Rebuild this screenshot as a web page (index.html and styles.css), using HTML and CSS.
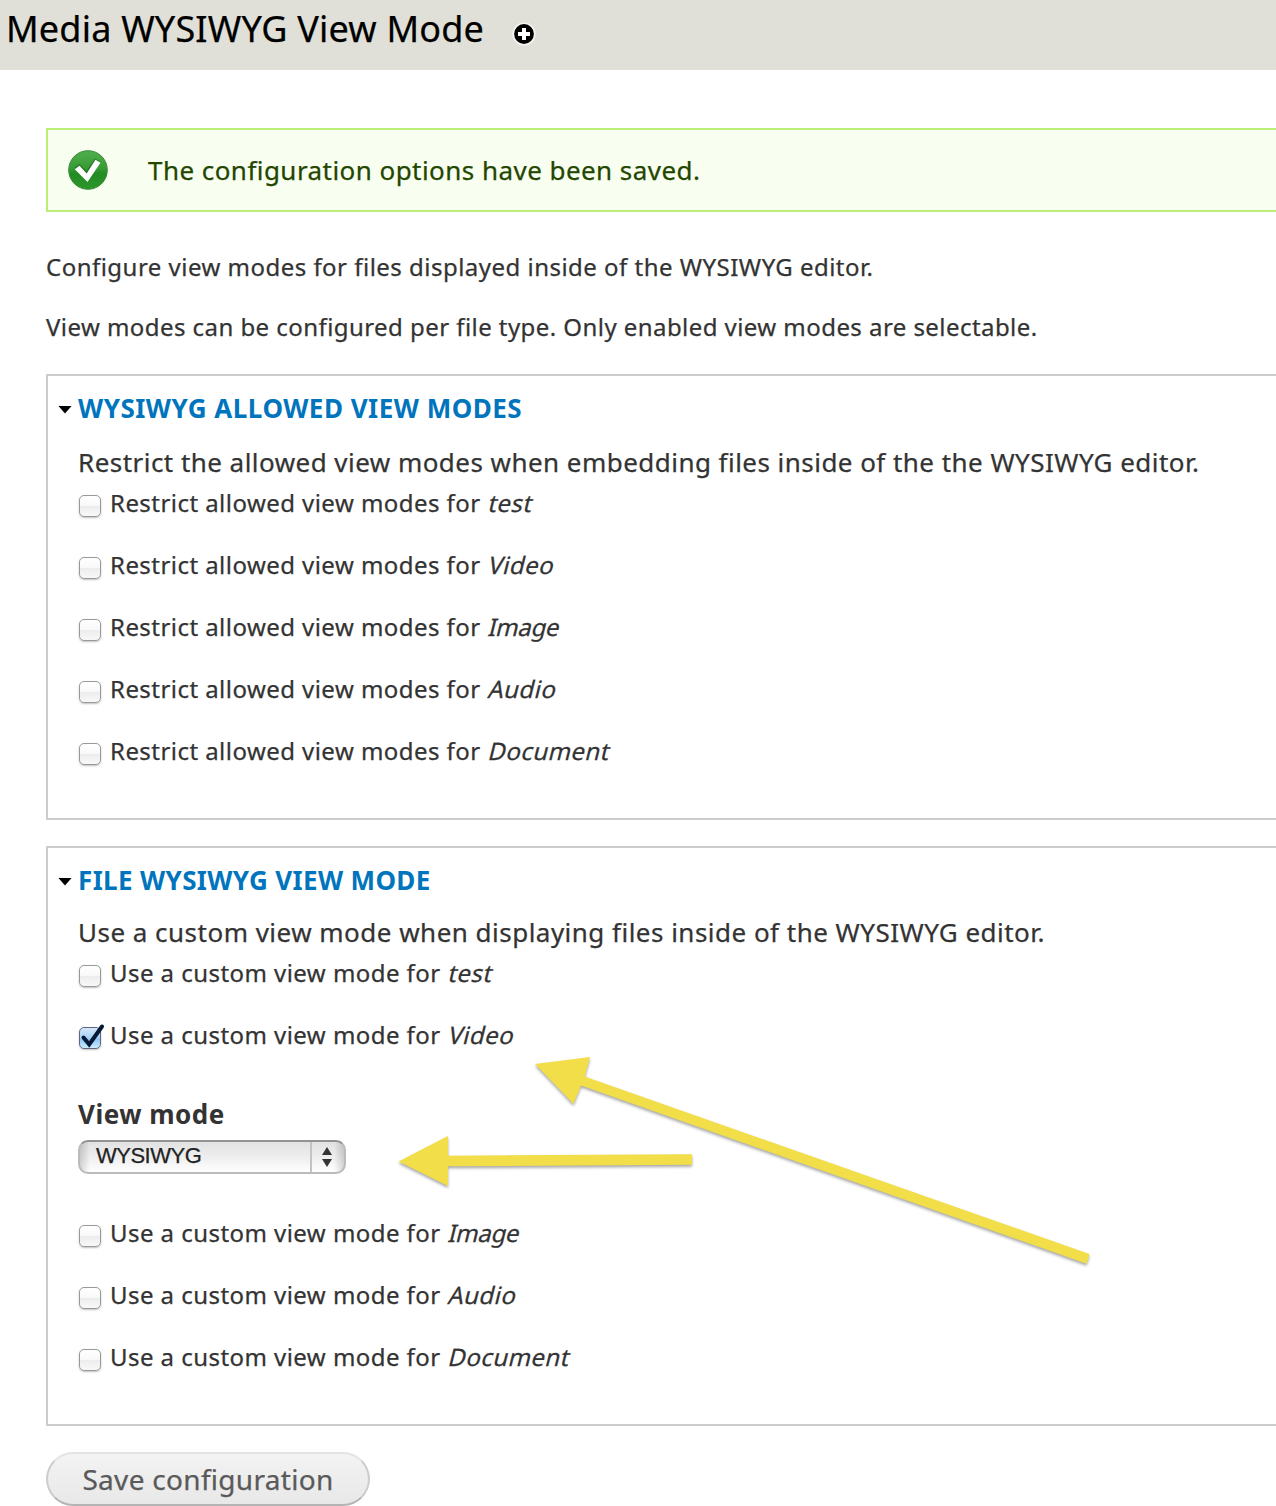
FILE: index.html
```html
<!DOCTYPE html>
<html lang="en">
<head>
<meta charset="utf-8">
<title>Media WYSIWYG View Mode</title>
<link rel="stylesheet" href="styles.css">
</head>
<body>
<header class="branding">
  <h1 class="page-title">Media WYSIWYG View Mode</h1>
  <a class="shortcut" aria-label="Add to shortcuts">
    <svg width="24" height="24" viewBox="0 0 24 24"><circle cx="12" cy="12" r="11.6" fill="#f5f5f3"/><circle cx="12" cy="12" r="9.9" fill="#000"/><path d="M12 6v12M6 12h12" stroke="#fff" stroke-width="4"/></svg>
  </a>
</header>
<main class="content">
  <div class="status">
    <svg class="status-icon" width="44" height="44" viewBox="0 0 44 44">
      <defs><linearGradient id="ok" x1="0" y1="0" x2="0" y2="1"><stop offset="0" stop-color="#4fae4c"/><stop offset=".45" stop-color="#379c35"/><stop offset=".6" stop-color="#228b22"/><stop offset="1" stop-color="#2c982b"/></linearGradient></defs>
      <circle cx="22" cy="22" r="19.3" fill="url(#ok)" stroke="#3a8a3a"/>
      <path d="M8.500 19.500l5-3.500 6.800 7 8.700-12.500 5.500 3.200-12.500 19z" fill="#235f23" opacity=".6"/>
      <path d="M8.800 21.200l4.700-3.400 7.200 7.700 8.800-13.700 5 3-13 19.200z" fill="#fff"/>
    </svg>
    <span class="status-text">The configuration options have been saved.</span>
  </div>
  <div class="help">
    <p>Configure view modes for files displayed inside of the WYSIWYG editor.</p>
    <p class="help-second">View modes can be configured per file type. Only enabled view modes are selectable.</p>
  </div>
  <section class="fieldset fieldset-allowed">
    <h2 class="legend"><span class="arrow"></span>WYSIWYG ALLOWED VIEW MODES</h2>
    <p class="description">Restrict the allowed view modes when embedding files inside of the the WYSIWYG editor.</p>
    <div class="options">
      <label class="option"><span class="box"></span><span>Restrict allowed view modes for <em>test</em></span></label>
      <label class="option"><span class="box"></span><span>Restrict allowed view modes for <em>Video</em></span></label>
      <label class="option"><span class="box"></span><span>Restrict allowed view modes for <em class="tight">Image</em></span></label>
      <label class="option"><span class="box"></span><span>Restrict allowed view modes for <em>Audio</em></span></label>
      <label class="option"><span class="box"></span><span>Restrict allowed view modes for <em>Document</em></span></label>
    </div>
  </section>
  <section class="fieldset fieldset-custom">
    <h2 class="legend"><span class="arrow"></span>FILE WYSIWYG VIEW MODE</h2>
    <p class="description">Use a custom view mode when displaying files inside of the WYSIWYG editor.</p>
    <div class="options">
      <label class="option"><span class="box"></span><span>Use a custom view mode for <em>test</em></span></label>
      <label class="option"><span class="box box-checked"><svg class="tick" width="28" height="28" viewBox="0 0 28 28"><path d="M5.500 15.500l5.700 7L24 4.500" fill="none" stroke="#061a35" stroke-width="4" stroke-linecap="round" stroke-linejoin="miter"/></svg></span><span>Use a custom view mode for <em>Video</em></span></label>
    </div>
    <div class="view-mode">
      <span class="view-mode-label">View mode</span>
      <div class="select"><span class="select-value">WYSIWYG</span><span class="select-arrows"><svg width="10" height="20" viewBox="0 0 10 20"><path d="M5 0l5 8H0zM0 12h10l-5 8z" fill="#333"/></svg></span></div>
    </div>
    <div class="options">
      <label class="option"><span class="box"></span><span>Use a custom view mode for <em class="tight">Image</em></span></label>
      <label class="option"><span class="box"></span><span>Use a custom view mode for <em>Audio</em></span></label>
      <label class="option"><span class="box"></span><span>Use a custom view mode for <em>Document</em></span></label>
    </div>
  </section>
  <button class="save" type="button">Save configuration</button>
</main>
<svg class="annotations" width="1276" height="1506" viewBox="0 0 1276 1506">
  <path d="M398.500 1161.500L448 1136v19.700l244-1.500v10.600l-244 1.500V1186z"/>
  <path d="M535 1064l55-7-5.300 19.500L1089.500 1254l-3 9.800L581 1085.500 573.500 1104z"/>
</svg>
</body>
</html>
```
FILE: styles.css
```css
* { box-sizing: border-box; }
body {
  margin: 0;
  position: relative;
  height: 1506px;
  overflow: hidden;
  background: #fff;
  color: #333;
  font-family: "Noto Sans", sans-serif;
  -webkit-text-stroke: 0.25px;
}
h1, h2, p { margin: 0; font-weight: normal; }
svg { display: block; }

.branding {
  display: flex;
  align-items: flex-start;
  height: 70px;
  padding-left: 6px;
  background: #e0e0d8;
}
.page-title {
  width: 506px;
  color: #000;
  font-size: 36px;
  line-height: 58px;
  letter-spacing: 0.2px;
  white-space: nowrap;
}
.shortcut { padding-top: 22px; }

.content { padding: 58px 0 0 46px; }
.status {
  display: flex;
  align-items: center;
  height: 84px;
  padding-left: 18px;
  border: 2px solid #be7;
  border-right: 0;
  background: #f8fff0;
  color: #234600;
  font-size: 26px;
  letter-spacing: 0.45px;
}
.status-text { margin-left: 38px; }

.help {
  padding: 25px 0 17px;
  font-size: 24px;
  line-height: 60px;
  letter-spacing: 0.48px;
  white-space: nowrap;
}
.help-second { letter-spacing: 0.44px; }

.fieldset {
  padding-left: 30px;
  border: 2px solid #ccc;
  border-right: 0;
}
.fieldset-allowed { height: 446px; margin-bottom: 26px; }
.fieldset-custom { height: 580px; margin-bottom: 26px; }
.legend {
  display: flex;
  align-items: center;
  height: 62px;
  padding-top: 2px;
  margin-left: -20px;
  color: #0074bd;
  font-size: 26px;
  font-weight: bold;
  letter-spacing: 0.45px;
  -webkit-text-stroke: 0;
}
.fieldset-allowed .legend { letter-spacing: 0.5px; }
.fieldset-custom .legend { letter-spacing: 0.36px; }
.arrow {
  width: 14px;
  height: 8px;
  margin: 3px 6px 0 0;
  background: #000;
  clip-path: polygon(0 0, 100% 0, 50% 100%);
}
.description {
  height: 48px;
  font-size: 26px;
  line-height: 48px;
  letter-spacing: 0.46px;
  white-space: nowrap;
}
.fieldset-custom .description { height: 46px; line-height: 44px; letter-spacing: 0.48px; }

.options { display: grid; gap: 28px; }
.option {
  display: flex;
  align-items: center;
  gap: 9px;
  height: 34px;
  font-size: 24px;
  line-height: 34px;
  letter-spacing: 0.45px;
  white-space: nowrap;
}
.option em {
  display: inline-block;
  font-style: normal;
  transform: skewX(-14deg);
  transform-origin: 0 26px;
}
.option .tight { letter-spacing: -0.3px; }
.box {
  position: relative;
  width: 22px;
  height: 22px;
  margin: 5px 0 0 1px;
  border: 1.500px solid #999;
  border-radius: 5px;
  background: linear-gradient(#fff, #f9f9f9 48%, #ededed 52%, #f8f8f8);
  box-shadow: 0 1px 2px rgba(0, 0, 0, 0.25);
}
.box-checked {
  border-color: #62677f;
  background: linear-gradient(#d5e8fa, #a8d0f5 50%, #8fc4f3 55%, #c9edff);
}
.tick { position: absolute; left: -2px; top: -6px; }

.view-mode { height: 164px; padding-top: 44px; }
.view-mode-label {
  display: block;
  font-size: 26px;
  font-weight: bold;
  line-height: 36px;
  letter-spacing: 0.5px;
  -webkit-text-stroke: 0;
}
.select {
  display: flex;
  width: 268px;
  height: 34px;
  margin-top: 8px;
  border: 2px solid #bbb;
  border-top-color: #929292;
  border-radius: 10px;
  background: linear-gradient(90deg, rgba(0,0,0,.15), transparent 10px, transparent 254px, rgba(0,0,0,.15)), linear-gradient(#e2e2e2, #eee 50%, #fff);
  color: #222;
  font: 22px/28px "Liberation Sans", Arial, sans-serif;
  letter-spacing: -0.5px;
}
.select-value { flex: 1; padding-left: 16px; }
.select-arrows {
  display: flex;
  align-items: center;
  justify-content: center;
  width: 34px;
  padding-right: 2px;
  border-left: 2px solid #c4c4c4;
}

.save {
  display: block;
  width: 324px;
  height: 54px;
  padding: 0;
  border: 2px solid #ccc;
  border-top-color: #e4e4e4;
  border-bottom-color: #b4b4b4;
  border-radius: 27px;
  background: linear-gradient(#f3f3f3, #e8e8e8);
  color: #5a5a5a;
  font: 28px "Noto Sans", sans-serif;
  letter-spacing: 0.3px;
}

.annotations {
  position: absolute;
  left: 0;
  top: 0;
  fill: #f2de49;
  filter: drop-shadow(0 2px 1.500px rgba(0, 0, 0, 0.35));
  pointer-events: none;
}
```
